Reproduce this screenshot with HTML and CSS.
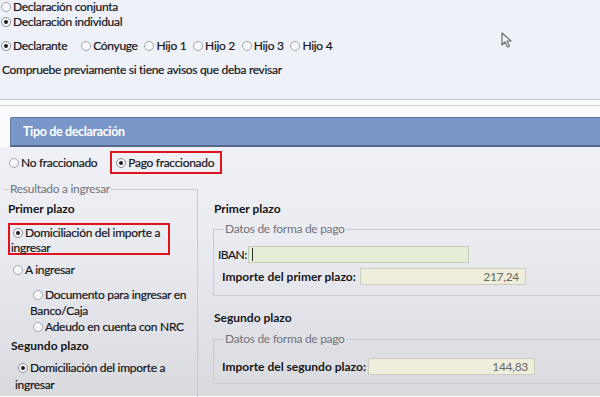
FILE: index.html
```html
<!DOCTYPE html>
<html lang="es">
<head>
<meta charset="utf-8">
<title>Tipo de declaración</title>
<link rel="stylesheet" href="styles.css">
</head>
<body>
<div class="page">
  <section class="top">
    <div class="row r1"><span class="radio"></span>Declaración conjunta</div>
    <div class="row r2"><span class="radio on"></span>Declaración individual</div>
    <div class="row r3">
      <span class="item"><span class="radio on"></span>Declarante</span>
      <span class="item"><span class="radio"></span>Cónyuge</span>
      <span class="item"><span class="radio"></span>Hijo 1</span>
      <span class="item"><span class="radio"></span>Hijo 2</span>
      <span class="item"><span class="radio"></span>Hijo 3</span>
      <span class="item"><span class="radio"></span>Hijo 4</span>
    </div>
    <div class="row r4">Compruebe previamente si tiene avisos que deba revisar</div>
  </section>
  <div class="sep"></div>
  <div class="panel">
    <div class="header">Tipo de declaración</div>
  </div>
  <main class="content">
    <div class="tipo">
      <span class="opt-a"><span class="radio"></span>No fraccionado</span>
      <span class="opt-b hl"><span class="radio on"></span>Pago fraccionado</span>
    </div>
    <div class="cols">
      <fieldset class="left">
        <legend>Resultado a ingresar</legend>
        <div class="bold l-primer">Primer plazo</div>
        <div class="hl domi"><span class="radio on"></span>Domiciliación del importe a<br>ingresar</div>
        <div class="l-aing"><span class="radio"></span>A ingresar</div>
        <div class="sub">
          <div class="doc"><span class="radio"></span>Documento para ingresar en<br>Banco/Caja</div>
          <div class="adeudo"><span class="radio"></span>Adeudo en cuenta con NRC</div>
        </div>
        <div class="bold l-seg">Segundo plazo</div>
        <div class="domi2"><span class="radio on"></span>Domiciliación del importe a<br>ingresar</div>
      </fieldset>
      <div class="right">
        <div class="bold r-primer">Primer plazo</div>
        <fieldset class="pago p1">
          <legend>Datos de forma de pago</legend>
          <div class="field iban-row">
            <span class="lbl-iban">IBAN:</span>
            <span class="input iban"><span class="caret"></span></span>
          </div>
          <div class="field imp-row">
            <span class="bold lbl">Importe del primer plazo:</span>
            <span class="input amount a1">217,24</span>
          </div>
        </fieldset>
        <div class="bold r-seg">Segundo plazo</div>
        <fieldset class="pago p2">
          <legend>Datos de forma de pago</legend>
          <div class="field imp-row2">
            <span class="bold lbl">Importe del segundo plazo:</span>
            <span class="input amount a2">144,83</span>
          </div>
        </fieldset>
      </div>
    </div>
  </main>
  <svg class="cursor" width="11" height="16" viewBox="0 0 11 16">
    <path d="M1 1 L1 13 L4 10 L6.5 15 L8.5 14 L6 9 L10 9 Z" fill="#f4f5f8" stroke="#6d6f76" stroke-width="1.2" stroke-linejoin="round"/>
  </svg>
</div>
</body>
</html>
```

FILE: styles.css
```css
* { box-sizing: border-box; }
html, body { margin: 0; padding: 0; }
body {
  width: 600px;
  height: 397px;
  overflow: hidden;
  font-family: Lato, "Noto Sans", "DejaVu Sans", sans-serif;
  font-size: 12px;
  letter-spacing: -0.3px;
  color: #161618;
  -webkit-text-stroke: 0.2px currentColor;
}
.page { position: relative; width: 600px; height: 397px; overflow: hidden; }

.radio {
  display: inline-block;
  width: 10px;
  height: 10px;
  border: 1px solid #a3a5ac;
  border-radius: 50%;
  background: #f7f8fb;
  vertical-align: -1px;
  margin-right: 2px;
  position: relative;
  -webkit-text-stroke: 0;
}
.radio.on { border-color: #8d8f96; }
.radio.on::after {
  content: "";
  position: absolute;
  left: 2px; top: 2px;
  width: 4px; height: 4px;
  border-radius: 50%;
  background: #1e1e1e;
}
.bold { font-weight: 700; letter-spacing: 0; -webkit-text-stroke: 0; }

/* top */
.top {
  background: #eef1f8;
  height: 100px;
  padding-left: 1px;
  padding-top: 1px;
  border-bottom: 1px solid #c4c6cc;
}
.row { line-height: 16px; white-space: nowrap; }
.r1 { line-height: 11px; height: 11px; }
.r2 { height: 20px; line-height: 20px; }
.r3 { margin-top: 6px; }
.r3 .item { margin-right: 4px; }
.r3 .item:first-child { margin-right: 11px; }
.r4 { margin-top: 8px; padding-left: 1px; }

.sep { height: 6px; background: #fbfbfd; border-bottom: 1px solid #cfd1d7; }
.panel { background: #fbfbfd; padding: 11px 0 0 10px; }
.header {
  height: 30px;
  background: #7a97c9;
  border-top: 1px solid #5f7297;
  border-left: 1px solid #6a7ea3;
  border-bottom: 2px solid #56688a;
  border-top-left-radius: 2px;
  color: #fff;
  font-weight: 700;
  font-size: 12.5px;
  letter-spacing: -0.35px;
  -webkit-text-stroke: 0;
  line-height: 27px;
  padding-left: 12px;
}

/* content */
.content {
  height: 249px;
  background: linear-gradient(#f0f1f7 0%, #eaebf1 40%, #dfe0e5 80%, #d9dade 100%);
}
.tipo { padding-top: 4px; height: 27px; display: flex; align-items: center; white-space: nowrap; }
.opt-a { margin-left: 9px; line-height: 16px; }
.hl { border: 2px solid #e0121c; }
.opt-b { margin-left: 13px; height: 23px; line-height: 19px; padding: 0 6px 0 4px; }

.cols { display: flex; align-items: flex-start; }

fieldset { margin: 0; padding: 0; min-width: 0; }
legend {
  color: #717379;
  line-height: 14px;
  padding: 0 1px;
  font-size: 12px;
  -webkit-text-stroke: 0;
}

.left {
  margin: 8px 0 0 3px;
  width: 195px;
  height: 230px;
  border: none;
  border-top: 1px solid #c9cbd1;
  border-right: 1px solid #c9cbd1;
  padding: 0 0 0 0;
}
.left legend { margin-left: 6px; }
.l-primer { margin: 5px 0 0 5px; line-height: 16px; }
.domi {
  margin: 6px 0 0 5px;
  width: 162px;
  height: 32px;
  line-height: 15px;
  padding: 0 0 0 1px;
  white-space: nowrap;
}
.domi .radio { margin-left: 2px; }
.l-aing { margin: 7px 0 0 10px; line-height: 16px; }
.sub { padding-left: 27px; }
.doc { margin-top: 9px; line-height: 16px; white-space: nowrap; }
.doc .radio { margin-left: 3px; }
.adeudo { line-height: 16px; }
.adeudo .radio { margin-left: 3px; }
.l-seg { margin: 3px 0 0 8px; line-height: 16px; }
.domi2 { margin: 5px 0 0 12px; line-height: 17px; white-space: nowrap; }
.domi2 .radio { margin-left: 3px; }

.right { flex: 1; padding-left: 15px; margin-right: -30px; }
.r-primer { margin-top: 27px; line-height: 16px; padding-left: 1px; }
.pago {
  border: 1px solid #c9cbd1;
  padding: 0 0 0 4px;
}
.pago legend { margin-left: 6px; }
.p1 { margin-top: 5px; padding-bottom: 10px; }
.field { display: flex; align-items: center; height: 17px; white-space: nowrap; }
.iban-row { margin-top: 10px; }
.lbl-iban { letter-spacing: -0.5px; width: 30px; }
.input {
  display: inline-block;
  height: 17px;
  border: 1px solid #c9ccbf;
  position: relative;
  -webkit-text-stroke: 0;
}
.iban { width: 221px; background: #e4edd6; border-color: #c3cbb6; }
.caret { position: absolute; left: 3px; top: 1px; width: 1px; height: 13px; background: #333; }
.imp-row { margin-top: 5px; padding-left: 4px; }
.lbl { width: 138px; overflow: visible; }
.amount {
  background: #eeeedb;
  text-align: right;
  padding-right: 6px;
  color: #6a6a66;
  line-height: 15px;
}
.a1 { width: 166px; }
.r-seg { margin-top: 14px; line-height: 16px; padding-left: 1px; }
.p2 { margin-top: 6px; padding-bottom: 8px; }
.imp-row2 { margin-top: 12px; padding-left: 4px; }
.imp-row2 .lbl { width: 146px; }
.a2 { width: 167px; }

.cursor { position: absolute; left: 501px; top: 32px; }
```
